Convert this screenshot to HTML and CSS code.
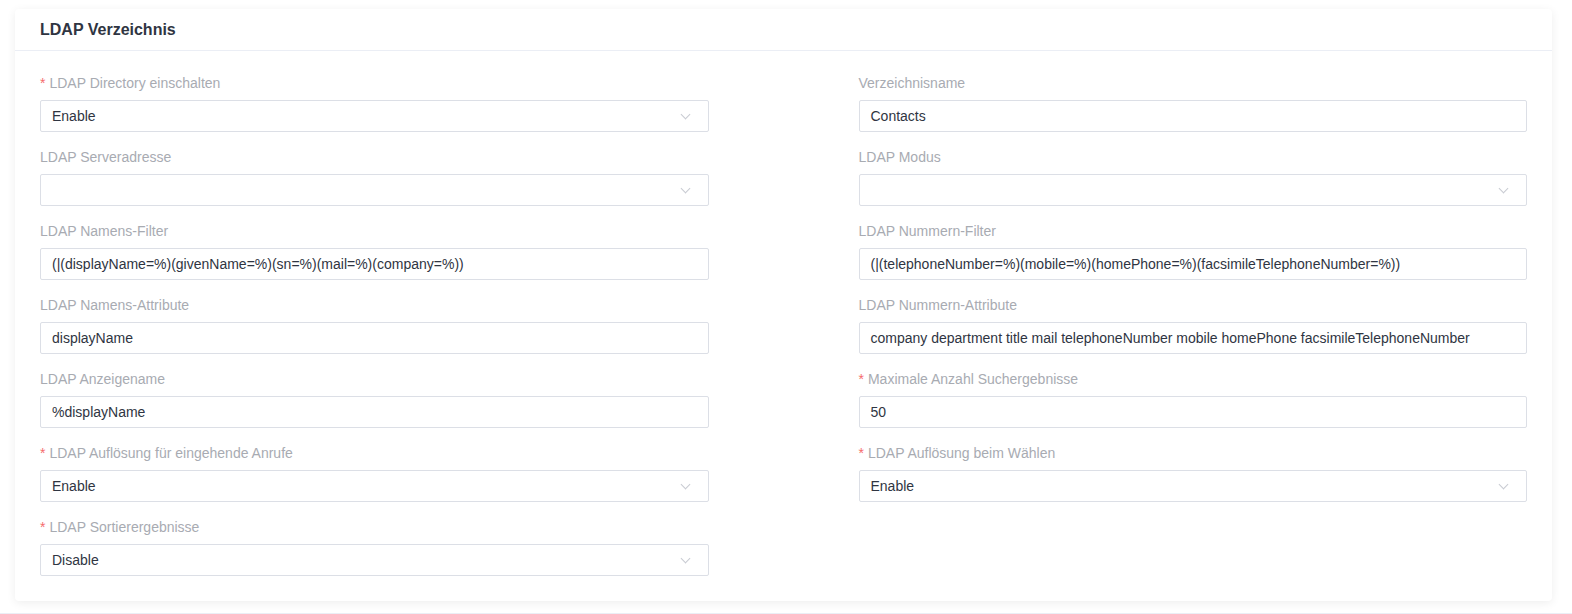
FILE: index.html
```html
<!DOCTYPE html>
<html lang="de">
<head>
  <meta charset="UTF-8" />
  <meta name="viewport" content="width=device-width, initial-scale=1.0"/>
  <title>LDAP Verzeichnis</title>
  <link rel="stylesheet" href="styles.css">
</head>
<body>

<div class="card">
  <div class="card-header">LDAP Verzeichnis</div>
  <div class="card-body">
    <div class="form-grid">

      <div class="item">
        <label class="required">LDAP Directory einschalten</label>
        <div class="field select">Enable</div>
      </div>
      <div class="item">
        <label>Verzeichnisname</label>
        <div class="field">Contacts</div>
      </div>

      <div class="item">
        <label>LDAP Serveradresse</label>
        <div class="field select"></div>
      </div>
      <div class="item">
        <label>LDAP Modus</label>
        <div class="field select"></div>
      </div>

      <div class="item">
        <label>LDAP Namens-Filter</label>
        <div class="field">(|(displayName=%)(givenName=%)(sn=%)(mail=%)(company=%))</div>
      </div>
      <div class="item">
        <label>LDAP Nummern-Filter</label>
        <div class="field">(|(telephoneNumber=%)(mobile=%)(homePhone=%)(facsimileTelephoneNumber=%))</div>
      </div>

      <div class="item">
        <label>LDAP Namens-Attribute</label>
        <div class="field">displayName</div>
      </div>
      <div class="item">
        <label>LDAP Nummern-Attribute</label>
        <div class="field">company department title mail telephoneNumber mobile homePhone facsimileTelephoneNumber</div>
      </div>

      <div class="item">
        <label>LDAP Anzeigename</label>
        <div class="field">%displayName</div>
      </div>
      <div class="item">
        <label class="required">Maximale Anzahl Suchergebnisse</label>
        <div class="field">50</div>
      </div>

      <div class="item">
        <label class="required">LDAP Auflösung für eingehende Anrufe</label>
        <div class="field select">Enable</div>
      </div>
      <div class="item">
        <label class="required">LDAP Auflösung beim Wählen</label>
        <div class="field select">Enable</div>
      </div>

      <div class="item">
        <label class="required">LDAP Sortierergebnisse</label>
        <div class="field select">Disable</div>
      </div>

    </div>
  </div>
</div>

<div class="next-card"></div>

</body>
</html>
```

FILE: styles.css
```css
* { margin: 0; padding: 0; box-sizing: border-box; }
body {
  font-family: Arial, "Liberation Sans", sans-serif;
  background: #fff;
  color: #303133;
  font-size: 14px;
}
.card {
  margin: 9px 20px 0 15px;
  background: #fff;
  border-radius: 4px;
  box-shadow: 0 2px 10px rgba(0,0,0,0.07);
}
.card-header {
  height: 42px;
  line-height: 41px;
  padding: 0 25px;
  font-size: 16px;
  font-weight: bold;
  color: #2f3542;
  border-bottom: 1px solid #ebeef5;
}
.card-body {
  padding: 22px 25px 10px;
}
.form-grid {
  display: grid;
  grid-template-columns: 1fr 1fr;
  column-gap: 150px;
}
.item {
  margin-bottom: 15px;
}
.item label {
  display: block;
  height: 20px;
  line-height: 20px;
  margin-bottom: 7px;
  color: #a8abb2;
  font-size: 14px;
}
.item label.required::before {
  content: "*";
  color: #f56c6c;
  margin-right: 4px;
}
.field {
  position: relative;
  height: 32px;
  line-height: 30px;
  padding: 0 11px;
  border: 1px solid #dcdfe6;
  border-radius: 2px;
  color: #2f3542;
  font-size: 14px;
  white-space: nowrap;
  overflow: hidden;
}
.field.select::after {
  content: "";
  position: absolute;
  right: 19px;
  top: 10px;
  width: 6px;
  height: 6px;
  border-right: 1px solid #c8cbd2;
  border-bottom: 1px solid #c8cbd2;
  transform: rotate(45deg);
}
.next-card {
  margin-top: 12px;
  border-top: 1px solid #ebeef5;
}
```
